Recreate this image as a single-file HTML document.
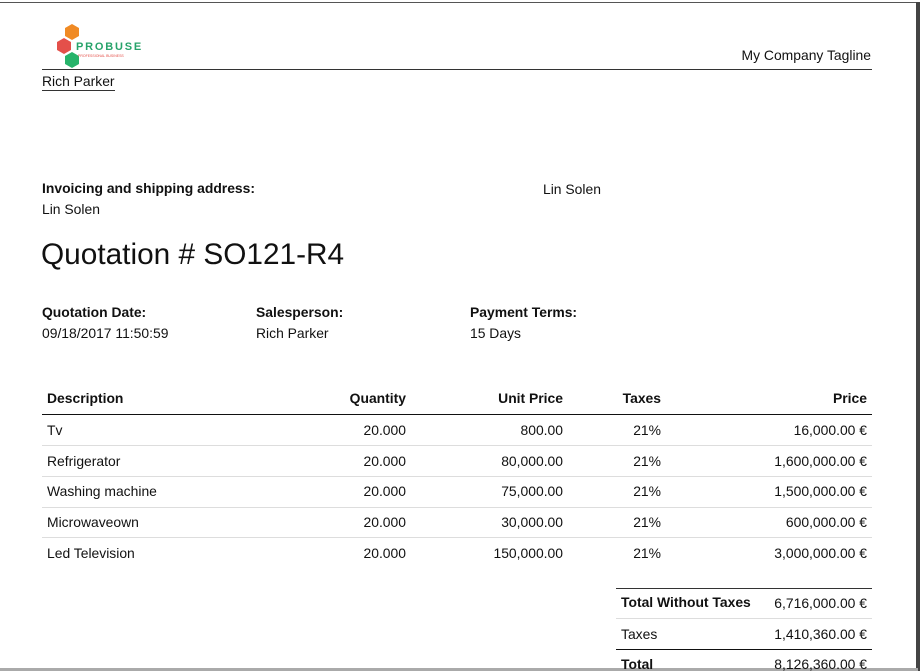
<!DOCTYPE html>
<html><head><meta charset="utf-8"><style>
*{margin:0;padding:0;box-sizing:border-box}
body{width:920px;height:671px;background:#fff;font-family:"Liberation Sans",Arial,sans-serif;color:#111;font-size:13.9px;position:relative;overflow:hidden}
.a{position:absolute;white-space:nowrap;line-height:16px}
.b{font-weight:bold}
.r{text-align:right}
.hl{position:absolute;height:1px}
</style></head><body>
<div class="hl" style="left:0;top:2px;width:918px;background:#555"></div>
<div style="position:absolute;left:916px;top:2px;width:4px;height:669px;background:#444"></div>
<div class="hl" style="left:0;top:668px;width:918px;height:3px;background:#aaa"></div>

<svg class="a" style="left:54px;top:22px" width="90" height="48" viewBox="0 0 90 48">
<polygon points="18,2 25,6 25,14 18,18 11,14 11,6" fill="#f08a24"/>
<polygon points="10,16 17,20 17,28 10,32 3,28 3,20" fill="#e4504a"/>
<polygon points="18,30 25,34 25,42 18,46 11,42 11,34" fill="#27b36a"/>
<text x="22" y="28" font-family="Liberation Sans" font-weight="bold" font-size="11" fill="#27a36a" letter-spacing="1.8">PROBUSE</text>
<text x="24" y="35" font-family="Liberation Sans" font-size="3.5" fill="#e4504a">PROFESSIONAL BUSINESS</text>
</svg>

<div class="a" style="right:49px;top:47px">My Company Tagline</div>
<div class="hl" style="left:42px;top:69px;width:830px;background:#333"></div>
<div class="a" style="left:42px;top:73px">Rich Parker</div>
<div class="hl" style="left:42px;top:90px;width:73px;background:#333"></div>

<div class="a b" style="left:42px;top:180px">Invoicing and shipping address:</div>
<div class="a" style="left:42px;top:201px">Lin Solen</div>
<div class="a" style="left:543px;top:181px">Lin Solen</div>
<div class="a" style="left:41px;top:238px;font-size:29.8px;line-height:34px">Quotation # SO121-R4</div>

<div class="a b" style="left:42px;top:304px">Quotation Date:</div>
<div class="a" style="left:42px;top:325px">09/18/2017 11:50:59</div>
<div class="a b" style="left:256px;top:304px">Salesperson:</div>
<div class="a" style="left:256px;top:325px">Rich Parker</div>
<div class="a b" style="left:470px;top:304px">Payment Terms:</div>
<div class="a" style="left:470px;top:325px">15 Days</div>

<div class="a b" style="left:47px;top:390px">Description</div>
<div class="a b r" style="right:514px;top:390px">Quantity</div>
<div class="a b r" style="right:357px;top:390px">Unit Price</div>
<div class="a b r" style="right:259px;top:390px">Taxes</div>
<div class="a b r" style="right:53px;top:390px">Price</div>
<div class="hl" style="left:42px;top:414px;width:830px;background:#111"></div>

<div class="a" style="left:47px;top:422px">Tv</div><div class="a r" style="right:514px;top:422px">20.000</div><div class="a r" style="right:357px;top:422px">800.00</div><div class="a r" style="right:259px;top:422px">21%</div><div class="a r" style="right:53px;top:422px">16,000.00 €</div>
<div class="hl" style="left:42px;top:445px;width:830px;background:#ddd"></div>
<div class="a" style="left:47px;top:453px">Refrigerator</div><div class="a r" style="right:514px;top:453px">20.000</div><div class="a r" style="right:357px;top:453px">80,000.00</div><div class="a r" style="right:259px;top:453px">21%</div><div class="a r" style="right:53px;top:453px">1,600,000.00 €</div>
<div class="hl" style="left:42px;top:476px;width:830px;background:#ddd"></div>
<div class="a" style="left:47px;top:483px">Washing machine</div><div class="a r" style="right:514px;top:483px">20.000</div><div class="a r" style="right:357px;top:483px">75,000.00</div><div class="a r" style="right:259px;top:483px">21%</div><div class="a r" style="right:53px;top:483px">1,500,000.00 €</div>
<div class="hl" style="left:42px;top:507px;width:830px;background:#ddd"></div>
<div class="a" style="left:47px;top:514px">Microwaveown</div><div class="a r" style="right:514px;top:514px">20.000</div><div class="a r" style="right:357px;top:514px">30,000.00</div><div class="a r" style="right:259px;top:514px">21%</div><div class="a r" style="right:53px;top:514px">600,000.00 €</div>
<div class="hl" style="left:42px;top:537px;width:830px;background:#ddd"></div>
<div class="a" style="left:47px;top:545px">Led Television</div><div class="a r" style="right:514px;top:545px">20.000</div><div class="a r" style="right:357px;top:545px">150,000.00</div><div class="a r" style="right:259px;top:545px">21%</div><div class="a r" style="right:53px;top:545px">3,000,000.00 €</div>

<div class="hl" style="left:616px;top:588px;width:256px;background:#333"></div>
<div class="a b" style="left:621px;top:594px">Total Without Taxes</div><div class="a r" style="right:53px;top:595px">6,716,000.00 €</div>
<div class="hl" style="left:616px;top:618px;width:256px;background:#ddd"></div>
<div class="a" style="left:621px;top:626px">Taxes</div><div class="a r" style="right:53px;top:626px">1,410,360.00 €</div>
<div class="hl" style="left:616px;top:649px;width:256px;background:#111"></div>
<div class="a b" style="left:621px;top:656px">Total</div><div class="a r" style="right:53px;top:656px">8,126,360.00 €</div>
</body></html>
